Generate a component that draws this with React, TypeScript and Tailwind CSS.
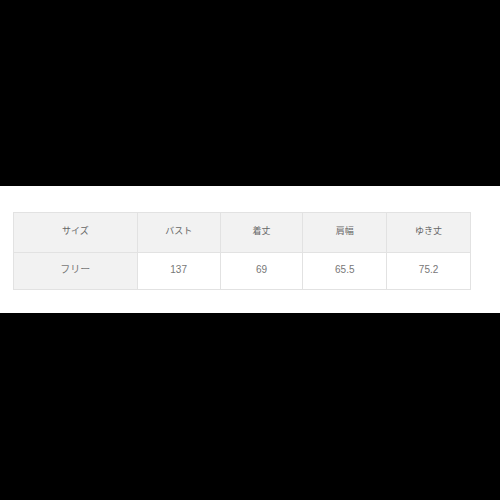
const headers = ["サイズ", "バスト", "着丈", "肩幅", "ゆき丈"];
const values = ["フリー", "137", "69", "65.5", "75.2"];
const widths = ["w-[124px]", "w-[83px]", "w-[83px]", "w-[84px]", "w-[83px]"];

export default function App() {
  return (
    <div
      className="flex h-[500px] w-[500px] flex-col bg-black"
      style={{ fontFamily: '"Liberation Sans", "Noto Sans CJK JP", sans-serif' }}
    >
      <div className="mt-[186px] h-[127px] w-full bg-white pl-[13px] pt-[26px]">
        <div className="flex w-[458px] flex-col border border-[#e2e2e2]">
          <div className="flex h-[39px] bg-[#f2f2f2]">
            {headers.map((h, i) => (
              <div
                key={h}
                className={`${widths[i]} flex items-center justify-center border-r border-[#e2e2e2] pb-[2px] text-[9px] text-[#666] last:border-r-0`}
              >
                {h}
              </div>
            ))}
          </div>
          <div className="flex h-[37px] border-t border-[#e2e2e2]">
            {values.map((v, i) => (
              <div
                key={v}
                className={`${widths[i]} flex items-center justify-center border-r border-[#e2e2e2] pb-[4px] text-[10px] text-[#777] last:border-r-0 ${i === 0 ? "bg-[#f2f2f2]" : "bg-white"}`}
              >
                {v}
              </div>
            ))}
          </div>
        </div>
      </div>
    </div>
  );
}
